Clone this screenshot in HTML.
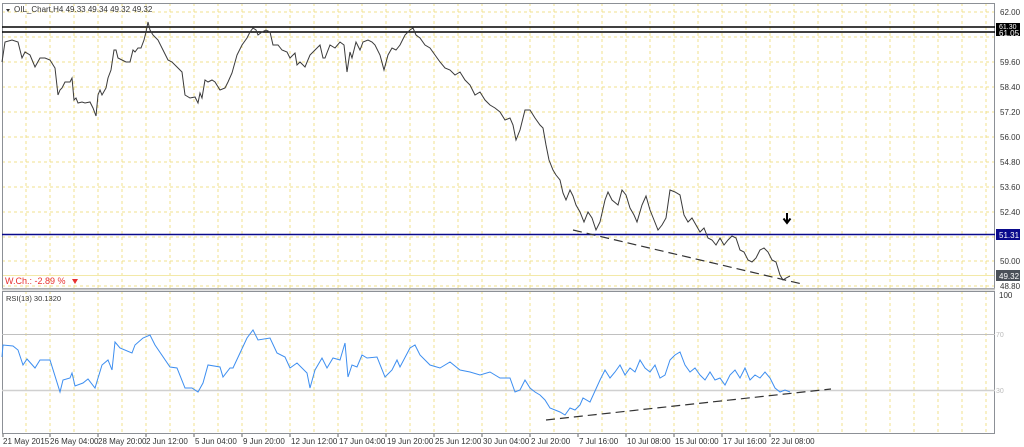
<!DOCTYPE html>
<html><head><meta charset="utf-8"><style>
body{margin:0;background:#fff;width:1024px;height:447px;overflow:hidden;font-family:"Liberation Sans",sans-serif}
svg{display:block}
text{font-family:"Liberation Sans",sans-serif;font-size:8px;fill:#333}
</style></head><body>
<svg width="1024" height="447" viewBox="0 0 1024 447">
<rect width="1024" height="447" fill="#fff"/>
<g stroke="#f0e08c" stroke-width="1" stroke-dasharray="3,3">
<path d="M26 3V433M50 3V433M74 3V433M98 3V433M122 3V433M146 3V433M170 3V433M194 3V433M218 3V433M242 3V433M266 3V433M290 3V433M314 3V433M338 3V433M362 3V433M386 3V433M410 3V433M434 3V433M458 3V433M482 3V433M506 3V433M530 3V433M554 3V433M578 3V433M602 3V433M626 3V433M650 3V433M674 3V433M698 3V433M722 3V433M746 3V433M770 3V433M794 3V433M818 3V433M842 3V433M866 3V433M890 3V433M914 3V433M938 3V433M962 3V433M986 3V433"/>
<path d="M2 12H995M2 37H995M2 62H995M2 87H995M2 112H995M2 137H995M2 162H995M2 187H995M2 212H995M2 237H995M2 261H995M2 286H995"/>
</g>
<line x1="2" y1="275.5" x2="995" y2="275.5" stroke="#f3e9a8"/>
<rect x="2.5" y="3.5" width="992" height="285" fill="none" stroke="#8c9096"/>
<rect x="2.5" y="291.5" width="992" height="142" fill="none" stroke="#8c9096"/>
<line x1="2" y1="289.5" x2="995" y2="289.5" stroke="#c8c8c8" stroke-width="2"/>
<line x1="2" y1="27" x2="995" y2="27" stroke="#000" stroke-width="1.6"/>
<line x1="2" y1="32" x2="995" y2="32" stroke="#000" stroke-width="1.6"/>
<line x1="2" y1="234.5" x2="995" y2="234.5" stroke="#0a0a8c" stroke-width="1.6"/>
<line x1="2" y1="334.5" x2="995" y2="334.5" stroke="#c0c0c0"/>
<line x1="2" y1="390.5" x2="995" y2="390.5" stroke="#d0d0d0" stroke-width="1.5"/>
<polyline fill="none" stroke="#3a3a3a" stroke-width="1" points="2,62 5,42 12,40 18,42 22,58 25,52 30,55 35,67 40,58 45,58 50,60 55,68 58,95 60,90 62,88 65,82 68,82 70,82 72,78 74,100 76,98 78,103 82,102 85,103 90,102 93,108 96,116 98,95 100,90 102,95 106,88 108,78 111,70 114,50 116,50 118,58 122,60 126,62 130,62 133,50 135,52 138,48 141,48 144,40 146,32 148,22 150,30 153,35 158,40 163,50 168,60 172,62 178,68 182,72 185,95 190,98 195,97 198,103 200,93 202,98 205,80 208,82 212,80 215,82 220,90 225,88 228,82 232,73 237,55 242,45 247,38 250,32 253,28 256,30 258,35 262,32 266,30 270,32 273,45 278,45 282,50 287,52 290,58 295,53 297,65 300,62 305,67 310,55 315,50 320,45 323,58 325,58 330,45 335,48 340,42 344,45 347,72 350,52 352,58 356,42 360,50 363,42 368,40 372,42 375,45 380,55 384,70 388,55 392,48 396,50 400,45 405,35 410,30 413,28 416,35 420,38 425,45 430,48 435,55 440,62 445,68 450,70 455,75 460,72 465,80 470,85 475,95 480,92 485,100 490,105 495,108 500,112 505,120 510,118 513,125 516,140 520,130 525,110 530,110 535,118 540,125 543,128 546,145 549,160 553,170 556,175 560,180 563,193 566,200 570,190 573,196 576,205 580,212 584,222 588,212 592,218 596,230 600,222 605,200 608,192 612,200 618,205 622,190 626,195 630,208 634,215 637,222 642,205 646,196 650,210 654,220 658,230 662,225 666,218 670,190 675,192 680,195 684,215 688,222 692,218 696,225 700,232 704,228 708,238 712,240 716,245 720,238 724,245 728,240 732,236 736,238 740,250 744,252 748,260 752,262 756,258 760,250 764,248 768,252 772,260 776,262 780,275 783,280 786,278 790,276"/>
<line x1="573" y1="230" x2="802" y2="284" stroke="#333" stroke-width="1.2" stroke-dasharray="9,5"/>
<line x1="546" y1="420" x2="831" y2="389" stroke="#333" stroke-width="1.2" stroke-dasharray="9,5"/>
<polyline fill="none" stroke="#3d8ef0" stroke-width="1" points="2,357 3,345 13,346 18,350 23,365 27,359 35,368 40,360 50,360 60,392 63,380 70,378 72,373 75,386 83,383 88,379 95,388 102,365 108,360 112,370 115,342 120,348 132,353 135,345 143,338 150,335 155,345 170,367 177,368 185,388 192,388 198,392 203,383 208,365 220,367 223,377 230,368 233,368 240,353 247,338 253,330 258,340 270,338 277,353 285,357 290,368 297,363 307,373 310,388 315,370 322,358 327,368 333,358 340,360 345,343 348,377 352,365 357,367 362,355 367,358 377,357 385,377 392,370 397,360 400,367 410,348 415,345 420,355 430,365 440,368 450,362 460,370 470,372 480,375 490,372 500,378 510,378 515,392 520,390 525,380 530,388 535,392 540,395 545,400 550,408 560,412 565,415 570,408 575,410 580,405 583,398 590,402 600,380 605,370 610,378 615,372 620,365 625,375 630,368 635,372 640,360 645,368 650,372 655,365 660,378 665,375 670,360 675,355 680,352 685,365 690,372 695,368 700,375 705,380 710,372 715,380 720,378 725,385 730,375 735,370 740,378 745,368 750,380 755,375 760,378 765,372 770,378 775,388 780,392 785,390 790,392"/>
<path d="M787 213V222M783.5 218.5L787 223L790.5 218.5" stroke="#000" stroke-width="2" fill="none"/>
<path d="M6 9L10 9L8 12Z" fill="#333"/>
<text x="14" y="12">OIL_Chart,H4  49.33 49.34 49.32 49.32</text>
<text x="5" y="284" style="fill:#e83030;font-size:9px">W.Ch.: -2.89 %</text>
<path d="M72 279L78 279L75 284Z" fill="#e83030"/>
<text x="6" y="301" style="font-size:7.5px">RSI(13) 30.1320</text>
<g>
<text x="1000" y="15">62.00</text>
<rect x="996" y="23" width="24" height="13" fill="#000"/>
<text x="999" y="29" style="fill:#fff;font-size:7px">61.30</text>
<text x="999" y="36" style="fill:#fff">61.05</text>
<text x="1000" y="65">59.60</text>
<text x="1000" y="90">58.40</text>
<text x="1000" y="115">57.20</text>
<text x="1000" y="140">56.00</text>
<text x="1000" y="165">54.80</text>
<text x="1000" y="190">53.60</text>
<text x="1000" y="215">52.40</text>
<rect x="996" y="229" width="24" height="11" fill="#0a0a8c"/>
<text x="999" y="238" style="fill:#fff">51.31</text>
<text x="1000" y="264">50.00</text>
<rect x="996" y="270" width="24" height="11" fill="#4a5058"/>
<text x="999" y="279" style="fill:#fff">49.32</text>
<text x="1000" y="289">48.80</text>
<text x="999" y="298">100</text>
<text x="996" y="337" style="fill:#bbb;font-size:7px">70</text>
<text x="996" y="393" style="fill:#bbb;font-size:7px">30</text>
</g>
<g>
<path d="M3 434v3M50 434v3M98 434v3M146 434v3M194 434v3M242 434v3M290 434v3M338 434v3M386 434v3M434 434v3M482 434v3M530 434v3M578 434v3M626 434v3M674 434v3M722 434v3M770 434v3" stroke="#666"/>
<g style="font-size:7.5px">
<text x="3" y="444">21 May 2015</text>
<text x="50" y="444">26 May 04:00</text>
<text x="98" y="444">28 May 20:00</text>
<text x="146" y="444">2 Jun 12:00</text>
<text x="195" y="444">5 Jun 04:00</text>
<text x="243" y="444">9 Jun 20:00</text>
<text x="291" y="444">12 Jun 12:00</text>
<text x="339" y="444">17 Jun 04:00</text>
<text x="387" y="444">19 Jun 20:00</text>
<text x="435" y="444">25 Jun 12:00</text>
<text x="483" y="444">30 Jun 04:00</text>
<text x="531" y="444">2 Jul 20:00</text>
<text x="579" y="444">7 Jul 16:00</text>
<text x="627" y="444">10 Jul 08:00</text>
<text x="675" y="444">15 Jul 00:00</text>
<text x="723" y="444">17 Jul 16:00</text>
<text x="771" y="444">22 Jul 08:00</text>
</g>
</g>
</svg>
</body></html>
